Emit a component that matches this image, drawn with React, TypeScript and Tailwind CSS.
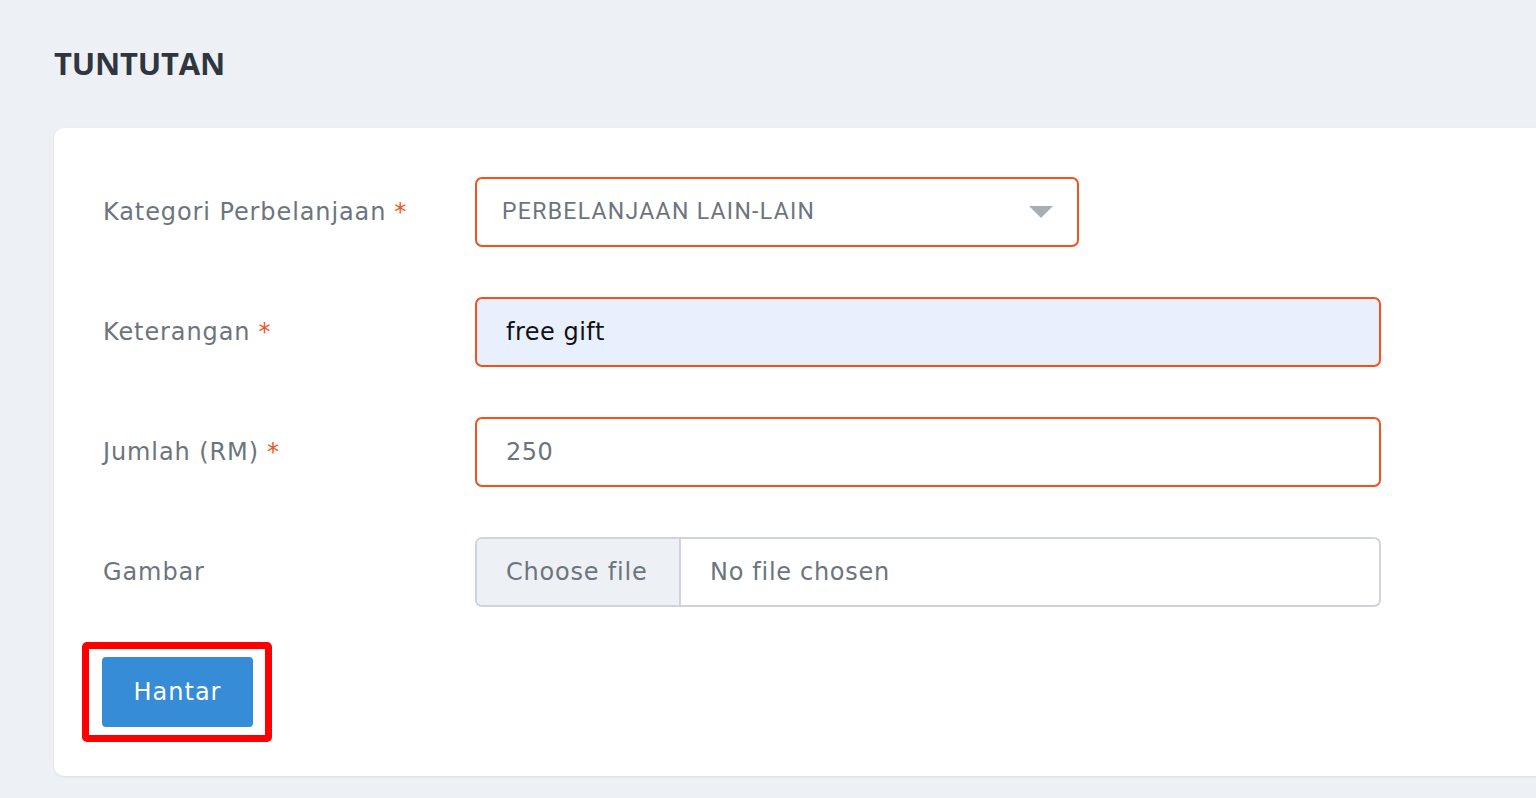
import React from "react";

const BODY = "font-['DejaVu_Sans',_'Noto_Sans',_sans-serif]";

function Label({ text, required }: { text: string; required?: boolean }) {
  return (
    <label className="w-[372px] shrink-0 text-[24px] tracking-[0.9px] text-[#6c757d]">
      {text}
      {required && <span className="ml-2 text-[#f4511e]">*</span>}
    </label>
  );
}

export default function App() {
  return (
    <div className={`min-h-screen bg-[#edf1f5] ${BODY} overflow-hidden`}>
      <div className="pl-[54px] pt-[43px]">
        <h1 className="font-['Open_Sans',_sans-serif] text-[31px] font-bold tracking-[-0.2px] text-[#2f3640] leading-[40px]">TUNTUTAN</h1>

        {/* Card */}
        <div className="mt-[45px] w-[1600px] rounded-l-[10px] bg-white shadow-[0_1px_3px_rgba(0,0,0,0.08)] pl-[49px] pt-[49px] pb-[34px]">
          <div className="flex flex-col gap-[50px]">
            {/* Kategori */}
            <div className="flex items-center">
              <Label text="Kategori Perbelanjaan" required />
              <div className="flex h-[70px] w-[604px] items-center justify-between rounded-[7px] border-2 border-[#f4511e] pl-[25px] pr-[24px]">
                <span className="font-['Roboto',_sans-serif] text-[23px] tracking-[1.3px] text-[#6c757d]">PERBELANJAAN LAIN-LAIN</span>
                <svg width="24" height="13" viewBox="0 0 24 13" className="mt-[1px]">
                  <path d="M0 0 L24 0 L12 12 Z" fill="#a7aeb6" />
                </svg>
              </div>
            </div>

            {/* Keterangan */}
            <div className="flex items-center">
              <Label text="Keterangan" required />
              <div className="flex h-[70px] w-[906px] items-center rounded-[7px] border-2 border-[#f4511e] bg-[#e8f0fe] pl-[29px]">
                <span className="text-[24px] tracking-[0.5px] text-[#111]">free gift</span>
              </div>
            </div>

            {/* Jumlah */}
            <div className="flex items-center">
              <Label text="Jumlah (RM)" required />
              <div className="flex h-[70px] w-[906px] items-center rounded-[7px] border-2 border-[#f4511e] pl-[29px]">
                <span className="text-[24px] tracking-[0.5px] text-[#6c757d]">250</span>
              </div>
            </div>

            {/* Gambar */}
            <div className="flex items-center">
              <Label text="Gambar" />
              <div className="flex h-[70px] w-[906px] overflow-hidden rounded-[7px] border-2 border-[#ced4da]">
                <div className="flex w-[204px] items-center border-r-2 border-[#ced4da] bg-[#edf1f5] pl-[29px]">
                  <span className="text-[24px] tracking-[0.8px] text-[#6c757d]">Choose file</span>
                </div>
                <div className="flex items-center pl-[29px]">
                  <span className="text-[24px] tracking-[0.7px] text-[#6c757d]">No file chosen</span>
                </div>
              </div>
            </div>
          </div>

          {/* Submit */}
          <div className="mt-[35px] -ml-[21px] w-[190px] rounded-[5px] border-[7px] border-[#ff0000] px-[13px] py-[8px]">
            <button className="flex h-[70px] w-[151px] items-center justify-center rounded-[4px] bg-[#368cd6] text-[24px] tracking-[1px] text-white">
              Hantar
            </button>
          </div>
        </div>
      </div>
    </div>
  );
}
